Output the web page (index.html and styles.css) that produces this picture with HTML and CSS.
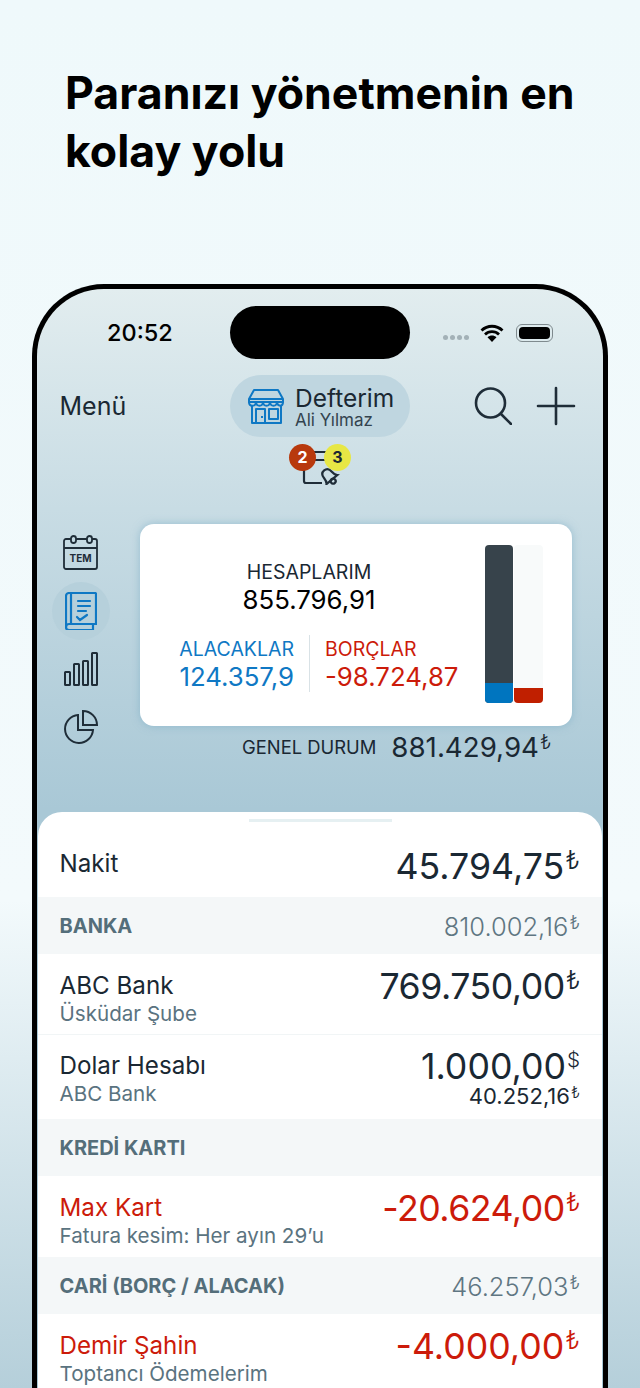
FILE: index.html
```html
<!DOCTYPE html>
<html lang="tr">
<head>
  <meta charset="utf-8">
  <title>Defterim</title>
  <link rel="stylesheet" href="styles.css">
</head>
<body>
  <h1 class="headline">Paranızı yönetmenin en<br>kolay yolu</h1>
  <div class="phone">
    <div class="status">
      <span class="time">20:52</span>
      <span class="island"></span>
      <span class="status-icons">
        <span class="dots"><i></i><i></i><i></i><i></i></span>
        <svg class="wifi" width="24" height="18" viewBox="0 0 24 18"><path d="M1.500 6.500C7.500.8 16.500.8 22.500 6.500M5 10.500c4-3.800 10-3.800 14 0" fill="none" stroke="#000" stroke-width="2.800"/><path d="M12 18L7.500 13.200c2.500-2.200 6.500-2.200 9 0z"/></svg>
        <span class="battery"><b></b></span>
      </span>
    </div>
    <div class="nav">
      <span class="menu">Menü</span>
      <div class="pill">
        <svg width="38" height="38" viewBox="0 0 38 38" fill="none" stroke="#0f78c4" stroke-width="2" stroke-linejoin="round"><path d="M7 3h24l5 9v3H2v-3z"/><path d="M2 12h34M2 15c0 5 6.500 5 7 0c.5 5 6.500 5 7 0c.5 5 6.500 5 7 0c.5 5 6.500 5 7 0c.5 5 6 5 6 0"/><path d="M5 19v17h29V19M9 36V22h9v14M22 22h9v10h-9zM15 29v2"/></svg>
        <div class="pill-text">
          <span class="pill-title">Defterim</span>
          <span class="pill-sub">Ali Yılmaz</span>
        </div>
      </div>
      <div class="nav-actions">
        <svg width="38" height="38" viewBox="0 0 38 38" fill="none" stroke="#1f2d38" stroke-width="2.600"><circle cx="16.500" cy="16" r="14.500"/><path d="M27 27l10 10" stroke-linecap="round"/></svg>
        <svg width="40" height="40" viewBox="0 0 40 40" fill="none" stroke="#1f2d38" stroke-width="2.600" stroke-linecap="round"><path d="M20 2v36M2 20h36"/></svg>
      </div>
    </div>
    <div class="alerts">
      <svg width="40" height="40" viewBox="0 0 40 40" fill="none" stroke="#1f2d38" stroke-width="2.200"><path d="M2 22v14q0 2 2 2h16M10 7h18M10 15h18"/><g transform="translate(26 30) rotate(-40)"><path d="M-7 6c2-2 2-4 2-6c0-4 2-6 5-6s5 2 5 6c0 2 0 4 2 6z"/><circle cx="0" cy="8" r="2.500"/></g></svg>
      <span class="badge badge-red">2</span>
      <span class="badge badge-yellow">3</span>
    </div>
    <div class="overview">
      <div class="side">
        <span class="side-item">
          <svg width="36" height="36" viewBox="0 0 36 36" fill="none" stroke="#1f2d38" stroke-width="1.800"><rect x="1" y="4" width="33" height="30" rx="2"/><path d="M1 13h33"/><rect x="8" y="1" width="5" height="7" rx="2.500" fill="#c3d9e2"/><rect x="24" y="1" width="5" height="7" rx="2.500" fill="#c3d9e2"/><text x="17.500" y="27" class="cal-text" stroke="none" fill="#1f2d38">TEM</text></svg>
        </span>
        <span class="side-item side-active">
          <svg width="32" height="38" viewBox="0 0 32 38" fill="none" stroke="#0f78c4" stroke-width="2.200"><path d="M4 1h26a1 1 0 0 1 1 1v30H4a3 3 0 0 0 0 6h24v-5"/><path d="M1 35V4a3 3 0 0 1 3-3h2v31"/><path d="M13 9h12M13 14h12M13 19h8M12 25l3 3 7-5" stroke-linecap="round"/></svg>
        </span>
        <span class="side-item">
          <svg width="34" height="34" viewBox="0 0 34 34" fill="none" stroke="#1f2d38" stroke-width="2"><rect x="1" y="20" width="5" height="13" rx=".5"/><rect x="10" y="12" width="5" height="21" rx=".5"/><rect x="19" y="9" width="5" height="24" rx=".5"/><rect x="28" y="1" width="5" height="32" rx=".5"/></svg>
        </span>
        <span class="side-item">
          <svg width="34" height="34" viewBox="0 0 34 34" fill="none" stroke="#1f2d38" stroke-width="2"><path d="M14 5a14 14 0 1 0 15 15H14z"/><path d="M19 1a14 14 0 0 1 14 14H19z"/></svg>
        </span>
      </div>
      <div class="summary">
        <div class="card">
          <div class="card-main">
            <div class="card-total">
              <span class="card-label">HESAPLARIM</span>
              <span class="card-value">855.796,91</span>
            </div>
            <div class="card-split">
              <div class="split-col split-in">
                <span class="card-label">ALACAKLAR</span>
                <span class="card-value">124.357,9</span>
              </div>
              <div class="split-col split-out">
                <span class="card-label">BORÇLAR</span>
                <span class="card-value">-98.724,87</span>
              </div>
            </div>
          </div>
          <div class="chart">
            <div class="bar bar-dark"><i class="fill-blue" style="height:20px"></i></div>
            <div class="bar bar-light"><i class="fill-red" style="height:15px"></i></div>
          </div>
        </div>
        <div class="general">
          <span class="general-label">GENEL DURUM</span>
          <span class="general-value">881.429,94<sup>₺</sup></span>
        </div>
      </div>
    </div>
    <div class="sheet">
      <div class="handle"></div>
      <div class="row row-cash">
        <div class="row-name">Nakit</div>
        <div class="amount">45.794,75<sup>₺</sup></div>
      </div>
      <div class="group">
        <span class="group-name">BANKA</span>
        <span class="group-sum">810.002,16<sup>₺</sup></span>
      </div>
      <div class="row row-line">
        <div><div class="row-name">ABC Bank</div><div class="row-sub">Üsküdar Şube</div></div>
        <div class="amount amount-tight">769.750,00<sup>₺</sup></div>
      </div>
      <div class="row row-usd">
        <div><div class="row-name">Dolar Hesabı</div><div class="row-sub">ABC Bank</div></div>
        <div class="amount-stack">
          <div class="amount">1.000,00<sup class="usd">$</sup></div>
          <div class="amount-small">40.252,16<sup>₺</sup></div>
        </div>
      </div>
      <div class="group">
        <span class="group-name">KREDİ KARTI</span>
      </div>
      <div class="row row-neg">
        <div><div class="row-name">Max Kart</div><div class="row-sub">Fatura kesim: Her ayın 29’u</div></div>
        <div class="amount amount-tight">-20.624,00<sup>₺</sup></div>
      </div>
      <div class="group">
        <span class="group-name">CARİ (BORÇ / ALACAK)</span>
        <span class="group-sum">46.257,03<sup>₺</sup></span>
      </div>
      <div class="row row-neg">
        <div><div class="row-name">Demir Şahin</div><div class="row-sub">Toptancı Ödemelerim</div></div>
        <div class="amount">-4.000,00<sup>₺</sup></div>
      </div>
    </div>
  </div>
</body>
</html>
```

FILE: styles.css
```css
html, body {
  margin: 0;
  height: 1388px;
  overflow: hidden;
}
body {
  background: linear-gradient(#eff9fb 0, #f3fafc 900px, #b5cfda 1388px);
  font-family: Inter, "Noto Sans", "DejaVu Sans", sans-serif;
  color: #1a2833;
}
sup {
  font-size: 72%;
  font-weight: 300;
  line-height: 0;
  vertical-align: 0.38em;
  margin-left: 1px;
}
sup.usd {
  font-size: 58%;
  vertical-align: 0.6em;
}
.headline {
  margin: 0;
  padding: 64px 0 0 65px;
  height: 284px;
  box-sizing: border-box;
  font-size: 44.6px;
  line-height: 58px;
  font-weight: 700;
  color: #000;
}
.phone {
  box-sizing: border-box;
  width: 576px;
  height: 1104px;
  margin-left: 32px;
  border: 5px solid #000;
  border-bottom: 0;
  border-radius: 72px 72px 0 0;
  background: linear-gradient(#e2edef 0, #c8dce4 220px, #a9c8d6 520px);
  overflow: hidden;
}
.status {
  display: grid;
  grid-template-columns: 193px 180px 1fr;
  align-items: center;
  height: 53px;
  padding-top: 17px;
}
.time {
  padding-left: 70px;
  font-size: 23.500px;
  font-weight: 500;
  color: #000;
}
.island {
  height: 53px;
  border-radius: 27px;
  background: #000;
}
.status-icons {
  display: flex;
  align-items: center;
  padding-left: 33px;
}
.dots {
  display: flex;
  gap: 2px;
  margin: 10px 11px 0 0;
}
.dots i {
  width: 5px;
  height: 5px;
  border-radius: 50%;
  background: #a3b1b7;
}
.battery {
  box-sizing: border-box;
  width: 37px;
  height: 18px;
  margin-left: 12px;
  padding: 2px;
  border: 1px solid #7f8a8e;
  border-radius: 6px;
}
.battery b {
  display: block;
  height: 100%;
  border-radius: 4px;
  background: #000;
}
.nav {
  display: grid;
  grid-template-columns: 193px 180px 1fr;
  align-items: center;
  margin-top: 16px;
  height: 62px;
}
.menu {
  padding-left: 22.500px;
  font-size: 25px;
}
.pill {
  display: flex;
  align-items: center;
  gap: 10px;
  height: 62px;
  box-sizing: border-box;
  padding-left: 17px;
  border-radius: 31px;
  background: #bfd6e0;
}
.pill-text {
  display: flex;
  flex-direction: column;
  padding-top: 2px;
}
.pill-title {
  font-size: 24.500px;
  line-height: 26px;
}
.pill-sub {
  font-size: 17px;
  line-height: 18px;
  color: #33434f;
}
.nav-actions {
  display: flex;
  align-items: center;
  gap: 24px;
  padding-left: 64px;
}
.alerts {
  position: relative;
  width: 40px;
  height: 40px;
  margin: 8px 0 0 265px;
}
.badge {
  position: absolute;
  top: -1px;
  width: 27px;
  height: 27px;
  border-radius: 50%;
  font-size: 16px;
  font-weight: 700;
  line-height: 27px;
  text-align: center;
}
.badge-red {
  left: -13px;
  background: #b8390d;
  color: #fff;
}
.badge-yellow {
  left: 22px;
  background: #e7e745;
  color: #1a2833;
}
.overview {
  display: flex;
  margin-top: 39px;
}
.side {
  display: flex;
  flex-direction: column;
  align-items: flex-start;
  width: 103px;
  padding-left: 15px;
  box-sizing: border-box;
}
.side-item {
  display: flex;
  align-items: center;
  justify-content: center;
  width: 58px;
  height: 58px;
  border-radius: 50%;
}
.side-active {
  background: #b6d0db;
}
.cal-text {
  font-size: 10px;
  font-weight: 700;
  text-anchor: middle;
}
.summary {
  width: 432px;
}
.card {
  display: flex;
  box-sizing: border-box;
  height: 202px;
  border-radius: 14px;
  background: #fff;
  box-shadow: 0 0 8px rgba(120, 170, 195, .6);
}
.card-main {
  width: 345px;
}
.card-total {
  display: flex;
  flex-direction: column;
  align-items: center;
  padding-top: 35px;
  width: 338px;
}
.card-label {
  font-size: 19.500px;
  line-height: 26px;
}
.card-value {
  font-size: 25.800px;
  line-height: 30px;
}
.card-total .card-value {
  color: #000;
}
.card-split {
  display: flex;
  margin-top: 20px;
}
.split-col {
  display: flex;
  flex-direction: column;
  box-sizing: border-box;
  height: 57px;
  padding-top: 1px;
}
.split-in {
  width: 170px;
  padding-right: 15px;
  align-items: flex-end;
  border-right: 1px solid #d9e2e6;
  color: #0f78c4;
}
.split-out {
  padding-left: 15px;
  color: #cc1b0a;
}
.chart {
  display: flex;
  gap: 1px;
  margin-top: 21px;
  height: 158px;
}
.bar {
  display: flex;
  align-items: flex-end;
  overflow: hidden;
  border-radius: 4px;
}
.bar i {
  display: block;
  width: 100%;
}
.bar-dark {
  width: 28px;
  background: #37434b;
}
.bar-light {
  width: 29px;
  background: #f8fafa;
}
.fill-blue {
  background: #0075bf;
}
.fill-red {
  background: #c01f00;
}
.general {
  display: flex;
  align-items: center;
  gap: 15px;
  margin-top: 5px;
  padding-left: 102px;
  height: 32px;
}
.general-label {
  font-size: 18.400px;
}
.general-value {
  font-size: 27.700px;
  font-weight: 380;
}
.sheet {
  width: 564px;
  height: 576px;
  margin: 49px 0 0 1px;
  border-radius: 24px 24px 0 0;
  background: #fff;
  overflow: hidden;
}
.handle {
  width: 143px;
  height: 3px;
  margin: 7px auto 0;
  background: #e6f0f2;
}
.row {
  display: flex;
  justify-content: space-between;
  box-sizing: border-box;
  height: 81px;
  padding: 16px 22px 0 21.500px;
}
.row-cash {
  align-items: center;
  height: 75px;
  padding-top: 8px;
}
.row-line {
  border-bottom: 1px solid #f1f5f6;
}
.row-usd {
  height: 84px;
  padding-top: 15px;
}
.row-name {
  font-size: 24.200px;
  line-height: 32px;
}
.row-sub {
  font-size: 20.600px;
  line-height: 24px;
  color: #5a7380;
}
.amount {
  margin-top: -4px;
  font-size: 35.700px;
  font-weight: 380;
  line-height: 40px;
}
.row-cash .amount {
  margin-top: 4px;
}
.amount-tight {
  letter-spacing: -.5px;
}
.amount-stack {
  text-align: right;
}
.amount-small {
  margin-top: -1px;
  font-size: 22px;
  line-height: 22px;
}
.row-neg .row-name,
.row-neg .amount {
  color: #cc1b0a;
}
.group {
  display: flex;
  align-items: center;
  justify-content: space-between;
  box-sizing: border-box;
  height: 57px;
  padding: 1px 22px 0 21.500px;
  background: #f4f7f8;
}
.group-name {
  font-size: 20px;
  font-weight: 700;
  color: #546e7a;
}
.group-sum {
  font-size: 25.500px;
  font-weight: 300;
  color: #5f7682;
}
```
